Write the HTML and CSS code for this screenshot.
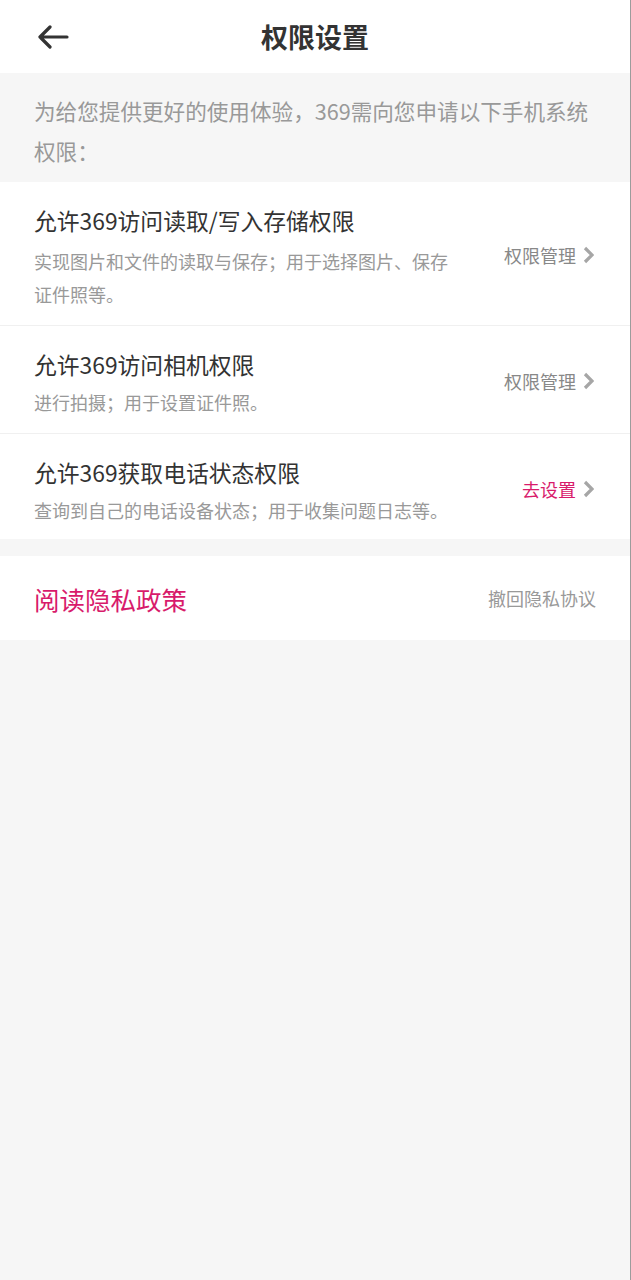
FILE: index.html
```html
<!DOCTYPE html>
<html lang="zh-CN">
<head>
	<meta charset="UTF-8">
	<title>权限设置</title>
<link rel="stylesheet" href="styles.css">
</head>
<body>
<div id="page">
	<div id="header">
		<a class="back" href="#">
			<svg width="32" height="24" viewBox="0 0 32 24"><path d="M30 12H3M13 2L3 12l10 10" fill="none" stroke="#333" stroke-width="3.2" stroke-linecap="round" stroke-linejoin="round"/></svg>
		</a>
		<h1>权限设置</h1>
	</div>

	<p id="tip">为给您提供更好的使用体验，369需向您申请以下手机系统权限：</p>

	<ul id="list">
		<li>
			<div class="info">
				<h3>允许369访问读取/写入存储权限</h3>
				<p>实现图片和文件的读取与保存；用于选择图片、保存证件照等。</p>
			</div>
			<a class="act" href="#">权限管理<svg class="arr" width="12" height="18" viewBox="0 0 12 18"><path d="M3 2l7 7-7 7" fill="none" stroke="#a6a6a6" stroke-width="3.2"/></svg></a>
		</li>
		<li>
			<div class="info">
				<h3>允许369访问相机权限</h3>
				<p>进行拍摄；用于设置证件照。</p>
			</div>
			<a class="act" href="#">权限管理<svg class="arr" width="12" height="18" viewBox="0 0 12 18"><path d="M3 2l7 7-7 7" fill="none" stroke="#a6a6a6" stroke-width="3.2"/></svg></a>
		</li>
		<li>
			<div class="info">
				<h3>允许369获取电话状态权限</h3>
				<p>查询到自己的电话设备状态；用于收集问题日志等。</p>
			</div>
			<a class="act on" href="#">去设置<svg class="arr" width="12" height="18" viewBox="0 0 12 18"><path d="M3 2l7 7-7 7" fill="none" stroke="#a6a6a6" stroke-width="3.2"/></svg></a>
		</li>
	</ul>

	<div id="privacy">
		<a class="read" href="#">阅读隐私政策</a>
		<a class="undo" href="#">撤回隐私协议</a>
	</div>
</div>
</body>
</html>
```

FILE: styles.css
```css
*{margin: 0;padding: 0;list-style: none;box-sizing: border-box;font-family: 'Noto Sans CJK SC','Noto Sans',sans-serif}
a{text-decoration: none}
body{background: #f6f6f6}
#page{width: 631px;min-height: 1280px;border-right: 1px solid #9c9c9c;background: #f6f6f6}
#header{height: 73px;background: white;position: relative;display: flex;align-items: center;justify-content: center}
#header .back{position: absolute;left: 37px;top: 25px;display: block;height: 24px}
#header h1{font-size: 27px;color: #333;font-weight: bold;line-height: 73px}
#tip{padding: 18px 34px 11px;font-size: 21.6px;line-height: 40px;color: #999}
#list{background: white}
#list li{display: flex;align-items: center;padding: 23px 34px 14px 34px;border-bottom: 1px solid #f0f0f0}
#list li:last-child{border-bottom: 0;padding-bottom: 12px}
#list .info{flex: 1;padding-right: 40px}
#list h3{font-size: 22.8px;line-height: 32px;font-weight: normal;color: #333}
#list p{font-size: 18px;line-height: 34px;color: #999;margin-top: 4px}
#list li:first-child p{margin-top: 8px;line-height: 33px}
#list .act{display: flex;align-items: center;font-size: 18px;color: #888;white-space: nowrap;margin-right: 2px;margin-bottom: 6px}
#list .act.on{color: #d81b6b}
#list .arr{margin-left: 6px}
#privacy{margin-top: 17px;height: 84px;background: white;display: flex;align-items: center;justify-content: space-between;padding: 0 34px}
#privacy .read{font-size: 25.5px;color: #d81b6b}
#privacy .undo{font-size: 18px;color: #999}
```
